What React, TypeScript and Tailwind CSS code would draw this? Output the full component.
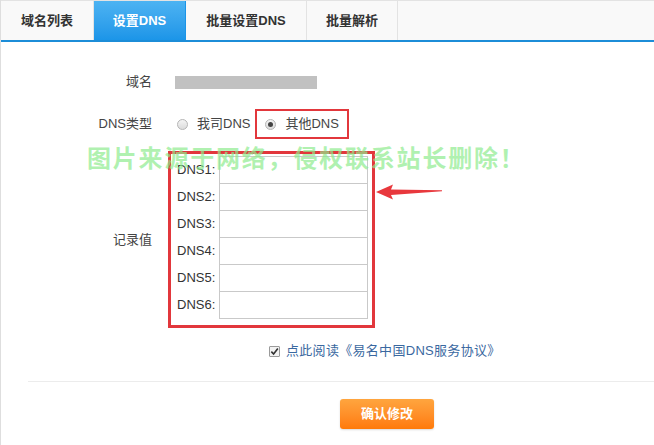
import React from 'react';

const tabs = [
    { label: '域名列表', w: 'w-[93px]' },
    { label: '设置DNS', w: 'w-[92px]', active: true },
    { label: '批量设置DNS', w: 'w-[121px]' },
    { label: '批量解析', w: 'w-[91px]' },
];

function Radio({ checked }: { checked?: boolean }) {
    return (
        <span className="w-[11px] h-[11px] rounded-full border border-[#b5b5b5] bg-gradient-to-b from-[#f4f4f4] to-[#dcdcdc] flex items-center justify-center">
            {checked && <span className="w-[5px] h-[5px] rounded-full bg-[#444]" />}
        </span>
    );
}

export default function App() {
    return (
        <div
            className="relative w-[654px] h-[445px] bg-white border-l border-[#dedede] overflow-hidden text-[13px] text-[#444]"
            style={{ fontFamily: '"Liberation Sans", "Noto Sans CJK SC", sans-serif' }}
        >
            {/* Tabs */}
            <div className="flex h-[42px] bg-[#f9f9f9] border-t border-[#e3e3e3] border-b-2 border-b-[#1c8dd8]">
                {tabs.map((t) => (
                    <div
                        key={t.label}
                        className={`${t.w} flex items-center justify-center font-bold border-r border-[#e3e3e3] ${
                            t.active
                                ? 'bg-gradient-to-b from-[#4cb3f2] to-[#1b95e8] text-white border-r-[#1b95e8]'
                                : 'text-[#333]'
                        }`}
                    >
                        {t.label}
                    </div>
                ))}
            </div>

            {/* Form */}
            <div className="grid grid-cols-[151px_1fr] gap-x-[16px] pt-[25px]">
                <div className="h-[30px] flex items-center justify-end">域名</div>
                <div className="h-[30px] flex items-center">
                    <span className="ml-[7px] w-[142px] h-[13px] bg-[#c1c1c1]" />
                </div>

                <div className="mt-[12px] h-[30px] flex items-center justify-end">DNS类型</div>
                <div className="mt-[12px] h-[30px] flex items-center">
                    <label className="ml-[9px] flex items-center gap-[9px]">
                        <Radio />
                        <span>我司DNS</span>
                    </label>
                    <label className="ml-[5px] h-[30px] flex items-center gap-[9px] border-2 border-[#e2373c] pl-[8px] pr-[8px]">
                        <Radio checked />
                        <span>其他DNS</span>
                    </label>
                </div>

                <div className="mt-[12px] flex items-center justify-end">记录值</div>
                <div className="mt-[12px]">
                    <div className="w-[207px] border-[3px] border-[#e2373c] pl-[6px] pr-[4px] pt-[2px] pb-[6px]">
                        {[1, 2, 3, 4, 5, 6].map((n) => (
                            <div key={n} className="flex items-center -mt-px first:mt-0">
                                <span className="w-[42px] text-[#333]">DNS{n}:</span>
                                <input className="w-[149px] h-[28px] border border-[#c9c9c9] bg-white outline-none" />
                            </div>
                        ))}
                    </div>
                </div>
            </div>

            {/* Agreement */}
            <div className="mt-[11px] h-[24px] pl-[268px] flex items-center gap-[6px]">
                <span className="w-[11px] h-[11px] border border-[#9a9a9a] bg-[#f2f2f2] flex items-center justify-center rounded-[1px]">
                    <svg width="9" height="9" viewBox="0 0 10 10">
                        <path d="M1.5 5.2 L4 7.8 L8.7 1.8" fill="none" stroke="#333" strokeWidth="1.8" />
                    </svg>
                </span>
                <span className="text-[#3a68a0] tracking-[0.3px]">点此阅读《易名中国DNS服务协议》</span>
            </div>

            <div className="mt-[18px] ml-[27px] border-t border-[#ececec]" />

            <div className="mt-[17px] pl-[339px]">
                <button className="w-[94px] h-[30px] rounded-[3px] bg-gradient-to-b from-[#ffa53e] to-[#ff7a06] text-white font-bold shadow-[0_1px_2px_rgba(0,0,0,0.15)]">
                    确认修改
                </button>
            </div>

            {/* Annotation arrow */}
            <svg className="absolute left-[373px] top-[183px]" width="70" height="18" viewBox="0 0 70 18">
                <path d="M2 9 L19 1.5 L17 6.5 L68 7.2 L68 8.2 L17 12 L19 16.5 Z" fill="#e8383d" />
            </svg>

            {/* Watermark */}
            <div className="absolute left-[86px] top-[141px] text-[24px] font-bold tracking-[1.8px] text-[#8deb8d]/70 pointer-events-none whitespace-nowrap">
                图片来源于网络，侵权联系站长删除！
            </div>
        </div>
    );
}
